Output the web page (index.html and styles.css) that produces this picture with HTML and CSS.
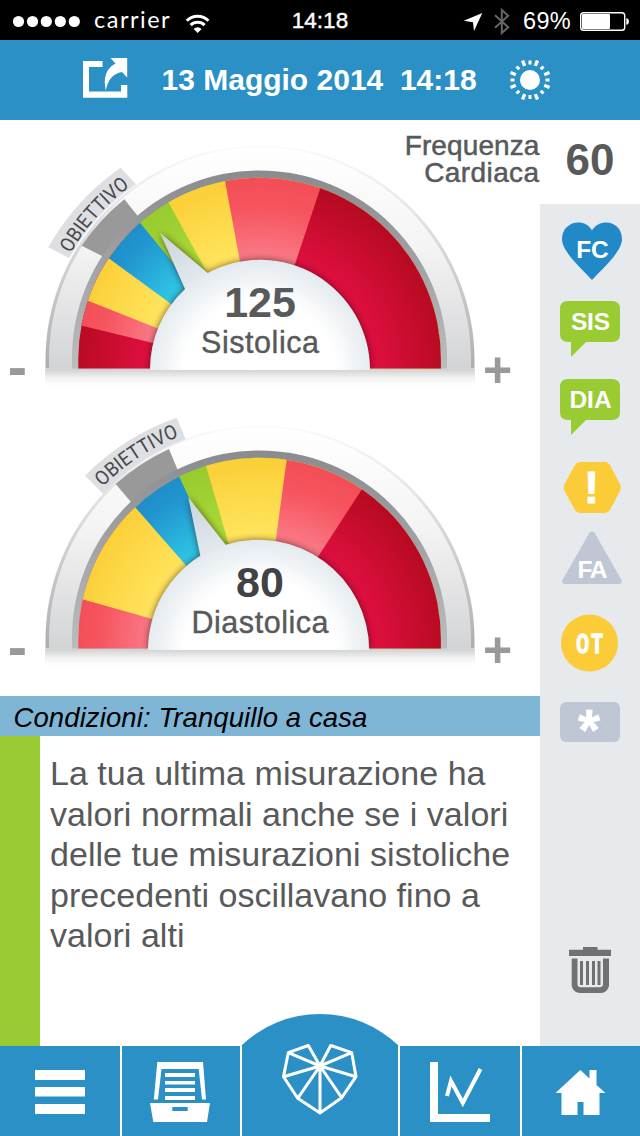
FILE: index.html
```html
<!DOCTYPE html>
<html lang="it">
<head>
<meta charset="utf-8">
<title>Misurazione</title>
<link rel="stylesheet" href="styles.css">
</head>
<body>
<div class="app">
  <div class="status">
    <div class="status-left">
      <svg width="68" height="40" viewBox="13 0 68 40" fill="#fff"><circle cx="18.5" cy="20.5" r="5.6"/><circle cx="32.5" cy="20.5" r="5.6"/><circle cx="46.3" cy="20.5" r="5.6"/><circle cx="60.3" cy="20.5" r="5.6"/><circle cx="74.3" cy="20.5" r="5.6"/></svg>
      <span class="carrier">carrier</span>
      <svg class="wifi" width="26" height="40" viewBox="185 0 26 40" fill="none" stroke="#fff" stroke-width="3"><path d="M186.8 19.8A15.3 15.3 0 0 1 208.4 19.8"/><path d="M190.6 24.1A10 10 0 0 1 204.6 24.1"/><path d="M193.6 28Q197.6 24.4 201.6 28L197.6 32Z" fill="#fff" stroke="none"/></svg>
    </div>
    <div class="clock">14:18</div>
    <div class="status-right">
      <svg width="54" height="40" viewBox="462 0 54 40"><path d="M482.3 12L463.8 19.8 473 21.2 474 30Z" fill="#fff"/><path d="M495 14.2L508.2 26.2 501.8 32V9L508.2 14.8 495 26.8" fill="none" stroke="#666" stroke-width="2"/></svg>
      <span class="percent">69%</span>
      <svg class="battery" width="52" height="40" viewBox="578 0 52 40"><rect x="580.7" y="11.7" width="44" height="17.6" rx="2.8" fill="none" stroke="#fff" stroke-width="1.4"/><rect x="582" y="13" width="28" height="15" rx="1" fill="#fff"/><path d="M626.3 17.2q2.6.4 2.6 3.3t-2.6 3.3z" fill="#fff"/></svg>
    </div>
  </div>

  <header class="header">
    <svg width="50" height="80" viewBox="80 40 50 80"><path d="M102.5 61H83V97.7H127.3V85H121V91.5H89V67H102.5Z" fill="#fff"/><path d="M110.5 58H127.2V77.5L122 72Q109 74 105.8 90.5 101.5 71 115.5 63.5Z" fill="#fff"/></svg>
    <h1 class="title">13 Maggio 2014  14:18</h1>
    <svg width="46" height="80" viewBox="506.5 40 46 80"><circle cx="529.5" cy="80" r="10" fill="#fff"/><g fill="none" stroke="#fff" stroke-width="3"><path d="M529.5 60.5v4M529.5 95v4M510 80h4M545 80h4M516 66.5l2.8 2.8M543 66.5l-2.8 2.8M516 93.5l2.8-2.8M543 93.5l-2.8-2.8" /><path stroke-width="3.4" d="M522 60.5l2.2 5.3M537 60.5l-2.2 5.3M522 99.5l2.2-5.3M537 99.5l-2.2-5.3M510 72.5l5.3 2.2M549 72.5l-5.3 2.2M510 87.5l5.3-2.2M549 87.5l-5.3-2.2"/></g></svg>
  </header>

  <main class="main">
    <section class="content">
      <div class="gauges">
        <svg class="gauge first" width="540" height="280" viewBox="0 120 540 280">
          <defs>
            <linearGradient id="body" gradientUnits="userSpaceOnUse" x1="0" y1="150" x2="0" y2="368"><stop offset="0" stop-color="#fff"/><stop offset=".45" stop-color="#f4f4f4"/><stop offset="1" stop-color="#d3d4d6"/></linearGradient>
            <linearGradient id="edge" gradientUnits="userSpaceOnUse" x1="0" y1="140" x2="0" y2="368"><stop offset="0" stop-color="#fdfdfd"/><stop offset=".4" stop-color="#dedede"/><stop offset="1" stop-color="#adaeb0"/></linearGradient>
            <linearGradient id="ring" gradientUnits="userSpaceOnUse" x1="0" y1="170" x2="0" y2="368"><stop offset="0" stop-color="#898b8e"/><stop offset="1" stop-color="#babcbe"/></linearGradient>
            <linearGradient id="fade" x1="0" y1="0" x2="0" y2="1"><stop offset="0" stop-color="#cfd0d1"/><stop offset=".5" stop-color="#f1f1f1"/><stop offset="1" stop-color="#fff"/></linearGradient>
            <radialGradient id="gYellow" gradientUnits="userSpaceOnUse" cx="260" cy="369" r="190"><stop offset=".58" stop-color="#ffe55f"/><stop offset="1" stop-color="#fbcf37"/></radialGradient>
            <radialGradient id="gSalmon" gradientUnits="userSpaceOnUse" cx="260" cy="369" r="190"><stop offset=".58" stop-color="#fa7b88"/><stop offset=".85" stop-color="#f6545e"/><stop offset="1" stop-color="#f24e57"/></radialGradient>
            <radialGradient id="gRed" gradientUnits="userSpaceOnUse" cx="260" cy="369" r="190"><stop offset=".58" stop-color="#df0f40"/><stop offset=".68" stop-color="#d60e39"/><stop offset="1" stop-color="#b50a20"/></radialGradient>
            <radialGradient id="gBlue" gradientUnits="userSpaceOnUse" cx="260" cy="369" r="190"><stop offset=".58" stop-color="#30c9e6"/><stop offset=".9" stop-color="#2195cf"/><stop offset="1" stop-color="#1f8ecb"/></radialGradient>
            <radialGradient id="gGreen" gradientUnits="userSpaceOnUse" cx="260" cy="369" r="190"><stop offset=".58" stop-color="#addb3a"/><stop offset="1" stop-color="#98cb2f"/></radialGradient>
            <radialGradient id="dome" gradientUnits="userSpaceOnUse" cx="260" cy="375" r="170"><stop offset="0" stop-color="#fff"/><stop offset=".45" stop-color="#fff"/><stop offset=".69" stop-color="#e1e8ed"/><stop offset="1" stop-color="#cbd5dd"/></radialGradient>
            <clipPath id="face"><path d="M78.3 368.5V359A181.3 181.3 0 0 1 440.9 359V368.5Z"/></clipPath>
            <filter id="soft" x="-20%" y="-20%" width="140%" height="140%"><feGaussianBlur stdDeviation="3.5"/></filter>
            <path id="shell" d="M45.5 368.5V360A214.5 214.5 0 0 1 474.5 360V368.5Z"/>
            <path id="track" d="M72 368.5V358A187.5 187.5 0 0 1 447 358V368.5Z"/>
            <path id="arc1" d="M68.6 257A216 216 0 0 1 136 182.2"/>
            <path id="arc2" d="M97.9 212A218 218 0 0 1 184 154.7"/>
          </defs>
          <rect x="45" y="369" width="430" height="17" fill="url(#fade)"/>
          <use href="#shell" fill="url(#edge)"/>
          <path d="M49 368V360A211 212.5 0 0 1 471 360V368Z" fill="url(#body)"/>
          <path fill="#999" d="M81.7 245.7A210 210 0 0 1 124.3 199.3L144.600 224.500 110 260Z"/>
          <use href="#track" fill="url(#ring)"/>
          <g clip-path="url(#face)">
            <rect x="70" y="160" width="380" height="210" fill="url(#gRed)"/>
            <path fill="url(#gSalmon)" d="M260 369L10.4 308.4 60 100 540 80V368.900Z"/>
            <path fill="url(#gYellow)" d="M260 369L19.2 273.4 60 100 540 80V368.900Z"/>
            <path fill="url(#gBlue)" d="M260 369L48.2 214 60 100 540 80V368.900Z"/>
            <path fill="url(#gGreen)" d="M260 369L92 164.2 540 80V368.900Z"/>
            <path fill="url(#gYellow)" d="M260 369L131.6 135.2 540 80V368.900Z"/>
            <path fill="url(#gSalmon)" d="M260 369L211 106 540 80V300Z"/>
            <path fill="url(#gRed)" d="M260 369L344.4 116 540 80V400H260Z"/>
            <path filter="url(#soft)" fill="#200" opacity=".6" d="M150 370A110 110 0 0 1 185 289L160 232.7 207.7 273A110 110 0 0 1 370 370Z"/>
          </g>
          <path fill="url(#dome)" d="M150 370A110 110 0 0 1 185 289L160 232.7 207.7 273A110 110 0 0 1 370 370Z"/>
          <path fill="#dddfe2" d="M48.3 247.3A238 238 0 0 1 120.7 167.7L136 184.3A215 215 0 0 0 69.3 258.3Z"/>
          <text class="goal"><textPath href="#arc1" startOffset="4" textLength="90" lengthAdjust="spacingAndGlyphs">OBIETTIVO</textPath></text>
          <text class="value" x="260" y="317">125</text>
          <text class="name" x="260" y="353" textLength="118">Sistolica</text>
          <text class="minus" x="17.5" y="387">-</text>
          <text class="plus" x="497.5" y="387">+</text>
        </svg>
        <svg class="gauge second" width="540" height="280" viewBox="0 120 540 280">
          <rect x="45" y="369" width="430" height="17" fill="url(#fade)"/>
          <use href="#shell" fill="url(#edge)"/>
          <path d="M49 368V360A211 212.5 0 0 1 471 360V368Z" fill="url(#body)"/>
          <path fill="#999" d="M115.7 204A210 210 0 0 1 169 169L181.800 200 138 230.300Z"/>
          <use href="#track" fill="url(#ring)"/>
          <g clip-path="url(#face)">
            <rect x="70" y="160" width="380" height="210" fill="url(#gSalmon)"/>
            <path fill="url(#gYellow)" d="M259 369L12.2 299.4 60 100 540 80V368.900Z"/>
            <path fill="url(#gBlue)" d="M259 369L85.4 170.2 540 80V368.900Z"/>
            <path fill="url(#gGreen)" d="M259 369L147 127 540 80V368.900Z"/>
            <path fill="url(#gYellow)" d="M259 369L185 113 540 80V368.900Z"/>
            <path fill="url(#gSalmon)" d="M261 369L297 103.4 540 80V300Z"/>
            <path fill="url(#gRed)" d="M258 369L402.8 146.4 540 80V400H258Z"/>
            <path filter="url(#soft)" fill="#200" opacity=".6" d="M148 370A111 111 0 0 1 200.3 275.7L188.3 217.3 225.7 264.7A111 111 0 0 1 369.3 370Z"/>
          </g>
          <path fill="url(#dome)" d="M148 370A111 111 0 0 1 200.3 275.7L188.3 217.3 225.7 264.7A111 111 0 0 1 369.3 370Z"/>
          <path fill="#dddfe2" d="M85 195.7A238 238 0 0 1 176.7 137.7L185.7 159.3A215 215 0 0 0 103.3 214Z"/>
          <text class="goal"><textPath href="#arc2" startOffset="7" textLength="92" lengthAdjust="spacingAndGlyphs">OBIETTIVO</textPath></text>
          <text class="value dark" x="260" y="317">80</text>
          <text class="name" x="260" y="353" textLength="137">Diastolica</text>
          <text class="minus" x="17.5" y="387">-</text>
          <text class="plus" x="497.5" y="387">+</text>
        </svg>
        <p class="rate-label">Frequenza<br><span class="wide">Cardiaca</span></p>
      </div>
      <div class="conditions">Condizioni: Tranquillo a casa</div>
      <p class="message">La tua ultima misurazione ha<br>valori normali anche se i valori<br>delle tue misurazioni sistoliche<br>precedenti oscillavano fino a<br>valori alti</p>
    </section>

    <aside class="side">
      <div class="rate">60</div>
      <div class="badges">
        <svg width="100" height="86" viewBox="0 204 100 86"><path fill="#2189c7" d="M52 280C43 270 22 252 22 239 22 221 45 217 52 230.500 60 217 82 221 82 239 82 252 61 270 52 280Z"/><text class="badge" x="52.500" y="258" font-size="24.500">FC</text></svg>
        <svg width="100" height="78" viewBox="0 290 100 78"><path fill="#99cc33" d="M28 301H72Q80 301 80 309V334Q80 342 72 342H46L31 357V342H28Q20 342 20 334V309Q20 301 28 301Z"/><text class="badge" x="50.500" y="330" font-size="24.500" textLength="39">SIS</text></svg>
        <svg width="100" height="78" viewBox="0 290 100 78"><path fill="#99cc33" d="M28 301H72Q80 301 80 309V334Q80 342 72 342H46L31 357V342H28Q20 342 20 334V309Q20 301 28 301Z"/><text class="badge" x="50.500" y="330" font-size="24.500">DIA</text></svg>
        <svg width="100" height="78" viewBox="0 446 100 78"><path fill="#fbcc38" d="M40 462H65Q68 462 70 465L80 484Q81.500 487.500 80 491L70 510Q68 513 65 513H40Q37 513 35 510L24.500 491Q23 487.500 24.500 484L35 465Q37 462 40 462Z"/><text class="badge bang" x="51.500" y="502.500" font-size="45">!</text></svg>
        <svg width="100" height="78" viewBox="0 524 100 78"><path fill="#bfc7d4" d="M49.300 533Q52 530 54.700 533L81.500 580Q82.500 584 79 584H25Q21 584 22.500 580Z"/><text class="badge" x="52.500" y="578" font-size="24.500" textLength="30">FA</text></svg>
        <svg width="100" height="78" viewBox="0 602 100 78"><circle cx="49.500" cy="643" r="28.500" fill="#fbcc38"/><text class="badge narrow" transform="translate(51 652.500) scale(.72 1)">OT</text></svg>
        <svg width="100" height="80" viewBox="0 680 100 80"><rect x="20" y="702" width="60" height="40" rx="6" fill="#bfc7d4"/><text class="badge star" x="49" y="750" font-size="57">*</text></svg>
      </div>
      <svg class="trash" width="100" height="116" viewBox="0 930 100 116"><path fill="#707174" d="M29 949.700H43V947H57.500V949.700H71V956H29ZM31.700 958.500H37.500V984Q37.500 987.300 41 987.300H59.500Q63 987.300 63 984V958.500H69V986Q67 993 61 993H40Q33.500 993 31.700 986ZM40 961H43V985H40ZM46 961H49V985H46ZM52 961H55V985H52ZM57.500 961H60.500V985H57.500Z"/></svg>
    </aside>
  </main>

  <nav class="nav">
    <a class="tab"><svg width="120" height="90" viewBox="0 1046 120 90"><path fill="#fff" d="M35 1070H85V1080H35ZM35 1087H85V1096.500H35ZM35 1104H85V1114H35Z"/></svg></a>
    <a class="tab"><svg width="118" height="90" viewBox="122 1046 118 90"><path fill="#fff" d="M157.300 1062H203L206 1099.500H202L198.700 1069H161.500L158 1099.500H153.800ZM165 1073H195V1077H165ZM165 1081H195V1084.500H165ZM165 1088H195V1092H165ZM165 1096H195V1100H165ZM150 1103H210L207 1122H153.300Z"/><path fill="#2b90c5" d="M172.300 1107H187.700V1111H172.300Z"/></svg></a>
    <a class="tab home-tab"><svg width="158" height="124" viewBox="241 1012 158 124"><path fill="#2b90c5" d="M241 1046A113.500 113.500 0 0 1 399 1046H398V1136H242V1046Z"/><path fill="none" stroke="#fff" stroke-width="3" stroke-linejoin="round" d="M320 1066L308.300 1045.500 288.300 1052.700 283.500 1076.700 297.700 1098.300 320 1113 341.700 1097.700 356 1076.700 351.700 1052.700 330.700 1045.500ZM320 1066V1113M288.300 1052.700L320 1066 283.500 1076.700M297.700 1098.300L320 1066 341.700 1097.700M356 1076.700L320 1066 351.700 1052.700"/></svg></a>
    <a class="tab"><svg width="120" height="90" viewBox="400 1046 120 90"><path fill="#fff" d="M430 1062H438V1114H490V1122H430Z"/><path fill="none" stroke="#fff" stroke-width="4" d="M447 1096L451 1081 462.800 1103 480.500 1069"/></svg></a>
    <a class="tab"><svg width="118" height="90" viewBox="522 1046 118 90"><path fill="#fff" d="M580.300 1070L589.500 1078.500V1070H596.500V1085L605.500 1093H599.500V1115H583.500V1102H577.500V1115H561.500V1093H555.500Z"/></svg></a>
  </nav>
</div>
</body>
</html>
```

FILE: styles.css
```css
* { box-sizing: border-box; }
body { margin: 0; font-family: "Liberation Sans", Arial, sans-serif; background: #fff; }
svg { display: block; flex: none; }
h1, p { margin: 0; font-weight: normal; }
.app { width: 640px; height: 1136px; display: flex; flex-direction: column; overflow: hidden; }

.status { height: 40px; background: #000; color: #fff; display: grid; grid-template-columns: 1fr 60px 1fr; align-items: center; }
.status-left { display: flex; align-items: center; padding-left: 13px; }
.carrier { font: 400 23.5px/36px Lato, sans-serif; height: 40px; letter-spacing: 1.5px; margin-left: 13px; width: 78px; }
.wifi { margin-left: 13px; }
.clock { font-size: 22.5px; line-height: 42px; text-align: center; -webkit-text-stroke: .4px #fff; }
.status-right { display: flex; align-items: center; justify-content: flex-end; padding-right: 10px; }
.percent { font-size: 23.5px; line-height: 42px; margin: 0 7px; letter-spacing: .3px; }

.header { height: 80px; background: #2b90c5; color: #fff; display: flex; align-items: center; padding-left: 80px; }
.title { font-weight: bold; font-size: 30px; line-height: 82px; white-space: pre; width: 345px; margin-left: 31.5px; }

.main { height: 926px; display: grid; grid-template-columns: 540px 100px; }
.content { display: flex; flex-direction: column; }
.gauges { height: 576px; display: grid; grid-template-rows: 280px 280px; grid-template-columns: 540px; }
.first { grid-area: 1 / 1; }
.second { grid-area: 2 / 1; }
.rate-label { grid-area: 1 / 1; justify-self: end; align-self: start; padding: 13px .5px 0 0; text-align: right; font-size: 28px; line-height: 26.5px; letter-spacing: .1px; color: #58595b; -webkit-text-stroke: .5px #58595b; }
.wide { letter-spacing: .4px; }
.goal { font: 400 20px Roboto, sans-serif; fill: #47484b; }
.value { font-weight: bold; font-size: 43px; text-anchor: middle; fill: #58595b; }
.dark { fill: #414246; }
.name { font-size: 30.5px; text-anchor: middle; fill: #58595b; stroke: #58595b; stroke-width: .4px; }
.minus, .plus { font-weight: bold; text-anchor: middle; fill: #999; }
.minus { font-size: 58px; }
.plus { font-size: 50px; }

.conditions { height: 40px; background: #7fb5d5; color: #000; font-style: italic; font-size: 27.5px; letter-spacing: .1px; line-height: 43px; padding-left: 13.5px; }
.message { flex: 1; border-left: 40px solid #99cc33; padding: 17px 0 0 10px; font-size: 34px; letter-spacing: .03px; line-height: 40.5px; color: #58595b; white-space: nowrap; }

.side { display: flex; flex-direction: column; background: #e6eaed; }
.rate { height: 84px; background: #fff; font-weight: bold; font-size: 44px; line-height: 80px; text-align: center; color: #58595b; }
.badge { font-weight: bold; fill: #fff; text-anchor: middle; }
.narrow { font-family: Roboto, sans-serif; font-size: 26px; letter-spacing: 4px; stroke: #fff; stroke-width: 1.5px; }
.bang { stroke: #fff; stroke-width: 1px; }
.star { stroke: #fff; stroke-width: .5px; }
.trash { margin-top: auto; }

.nav { height: 90px; display: grid; grid-template-columns: 120px 118px 156px 120px 118px; grid-template-rows: 90px; column-gap: 2px; background: #fff; }
.tab { background: #2b90c5; }
.home-tab { background: none; display: flex; align-items: flex-end; justify-content: center; }
```
